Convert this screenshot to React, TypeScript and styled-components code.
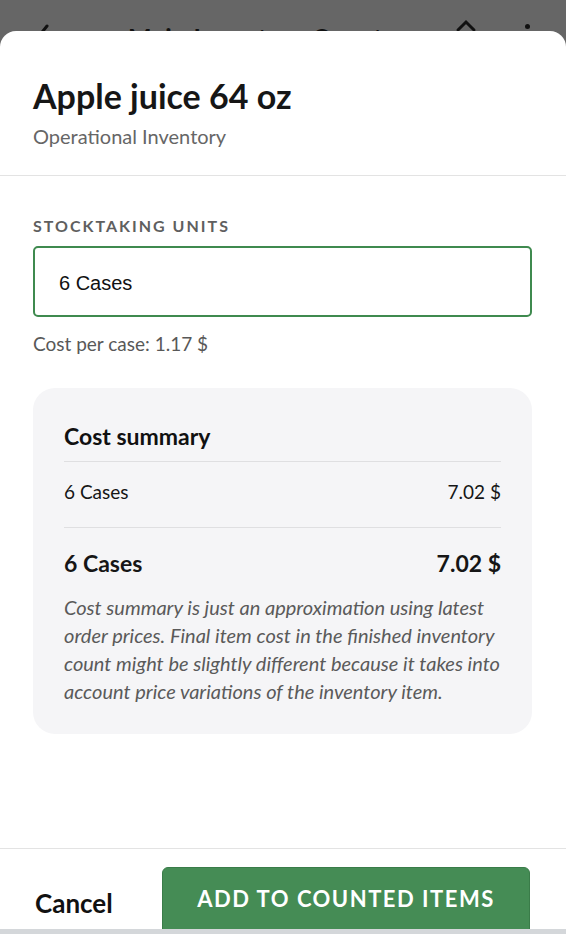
import styled, { createGlobalStyle } from "styled-components";

const GlobalStyle = createGlobalStyle`
  html, body {
    margin: 0;
    padding: 0;
    background: #666666;
  }
  * {
    box-sizing: border-box;
  }
`;

const App = () => {
  return (
    <Screen>
      <GlobalStyle />
      <AppBar>
        <BackIcon width="14" height="24" viewBox="0 0 14 24">
          <path d="M11 2 L3 12 L11 22" fill="none" stroke="#111" strokeWidth="3" strokeLinecap="round" />
        </BackIcon>
        <BarTitle>Main Inventory Count</BarTitle>
        <CollapseIcon width="24" height="24" viewBox="0 0 24 24">
          <path d="M4 14 L12 6 L20 14" fill="none" stroke="#111" strokeWidth="3" strokeLinecap="round" />
        </CollapseIcon>
        <Kebab>
          <i />
          <i />
          <i />
        </Kebab>
      </AppBar>

      <Sheet>
        <SheetHeader>
          <Title>Apple juice 64 oz</Title>
          <Subtitle>Operational Inventory</Subtitle>
        </SheetHeader>

        <SheetBody>
          <FieldLabel>STOCKTAKING UNITS</FieldLabel>
          <UnitInput type="text" defaultValue="6 Cases" />
          <Hint>Cost per case: 1.17 $</Hint>

          <SummaryCard>
            <CardTitle>Cost summary</CardTitle>
            <SummaryRow>
              <span>6 Cases</span>
              <span>7.02 $</span>
            </SummaryRow>
            <SummaryRow total>
              <span>6 Cases</span>
              <span>7.02 $</span>
            </SummaryRow>
            <Note>
              Cost summary is just an approximation using latest order prices. Final item cost in the
              finished inventory count might be slightly different because it takes into account price
              variations of the inventory item.
            </Note>
          </SummaryCard>
        </SheetBody>

        <SheetFooter>
          <CancelButton>Cancel</CancelButton>
          <PrimaryButton>ADD TO COUNTED ITEMS</PrimaryButton>
        </SheetFooter>
      </Sheet>

      <BottomStrip />
    </Screen>
  );
};

const Screen = styled.div`
  position: relative;
  width: 566px;
  height: 934px;
  overflow: hidden;
  background-color: #666666;
  font-family: Lato, "Noto Sans", sans-serif;
`;

const AppBar = styled.div`
  display: flex;
  flex-direction: row;
  align-items: flex-start;
  height: 60px;
  padding: 24px 36px 0 36px;
`;

const BackIcon = styled.svg`
  flex: 0 0 auto;
  margin-right: 78px;
`;

const CollapseIcon = styled.svg`
  flex: 0 0 auto;
  margin-top: -8px;
`;

const BarTitle = styled.div`
  flex: 1;
  margin-top: -2px;
  font-size: 25px;
  line-height: 30px;
  font-weight: 700;
  color: #111;
  letter-spacing: 0.6px;
  white-space: nowrap;
  overflow: hidden;
`;

const Kebab = styled.div`
  display: flex;
  flex-direction: column;
  gap: 4px;
  margin-left: 47px;
  padding-top: 0;

  i {
    width: 5px;
    height: 5px;
    border-radius: 50%;
    background: #111;
  }
`;

const Sheet = styled.div`
  position: absolute;
  top: 31px;
  left: 0;
  right: 0;
  bottom: 5px;
  display: flex;
  flex-direction: column;
  overflow: hidden;
  background-color: #ffffff;
  border-radius: 16px 16px 0 0;
`;

const SheetHeader = styled.div`
  padding: 45px 33px 0 33px;
  height: 145px;
  border-bottom: 1px solid #e3e3e3;
`;

const Title = styled.h1`
  margin: 0;
  font-size: 34px;
  line-height: 40px;
  font-weight: 700;
  color: #161616;
`;

const Subtitle = styled.div`
  margin-top: 8px;
  font-size: 20px;
  line-height: 24px;
  color: #666666;
`;

const SheetBody = styled.div`
  flex: 1;
  display: flex;
  flex-direction: column;
  padding: 40px 34px 0 33px;
`;

const FieldLabel = styled.div`
  font-size: 16px;
  line-height: 20px;
  font-weight: 700;
  letter-spacing: 2px;
  color: #5f5f5f;
`;

const UnitInput = styled.input`
  margin-top: 10px;
  width: 100%;
  height: 71px;
  padding: 3px 24px 0 24px;
  border: 2px solid #3f8a4f;
  border-radius: 5px;
  outline: none;
  font-family: "Liberation Sans", Arial, sans-serif;
  font-size: 20px;
  color: #111;
  background: #fff;
`;

const Hint = styled.div`
  margin-top: 15px;
  font-size: 19px;
  line-height: 24px;
  color: #585858;
`;

const SummaryCard = styled.div`
  margin-top: 32px;
  padding: 34px 31px 29px 31px;
  background-color: #f5f5f7;
  border-radius: 22px;
`;

const CardTitle = styled.div`
  font-size: 23px;
  line-height: 28px;
  font-weight: 700;
  color: #111;
  padding-bottom: 11px;
  border-bottom: 1px solid #dfdfe1;
`;

const SummaryRow = styled.div<{ total?: boolean }>`
  display: flex;
  flex-direction: row;
  justify-content: space-between;
  align-items: center;
  height: ${(p) => (p.total ? "62px" : "66px")};
  padding: ${(p) => (p.total ? "8px 0 0 0" : "0 0 7px 0")};
  font-size: ${(p) => (p.total ? "23px" : "19px")};
  font-weight: ${(p) => (p.total ? 700 : 400)};
  color: #161616;
  border-bottom: ${(p) => (p.total ? "none" : "1px solid #dfdfe1")};
`;

const Note = styled.p`
  margin: 3px 0 0 0;
  font-size: 20px;
  line-height: 28px;
  font-style: italic;
  color: #5a5a5a;
`;

const SheetFooter = styled.div`
  display: flex;
  flex-direction: row;
  align-items: flex-start;
  height: 81px;
  padding: 18px 36px 0 35px;
  border-top: 1px solid #e3e3e3;
`;

const CancelButton = styled.button`
  flex: 0 0 127px;
  margin-top: 20px;
  padding: 0;
  border: none;
  background: none;
  text-align: left;
  font-family: Lato, "Noto Sans", sans-serif;
  font-size: 26px;
  font-weight: 700;
  color: #111;
`;

const PrimaryButton = styled.button`
  flex: 1;
  height: 68px;
  padding: 0 0 6px 0;
  border: 1px solid #3a7c49;
  border-radius: 6px;
  background-color: #458c55;
  color: #ffffff;
  font-family: Lato, "Noto Sans", sans-serif;
  font-size: 22px;
  font-weight: 700;
  letter-spacing: 1.5px;
`;

const BottomStrip = styled.div`
  position: absolute;
  left: 0;
  right: 0;
  bottom: 0;
  height: 5px;
  background-color: #d4d7da;
`;

export default App;
